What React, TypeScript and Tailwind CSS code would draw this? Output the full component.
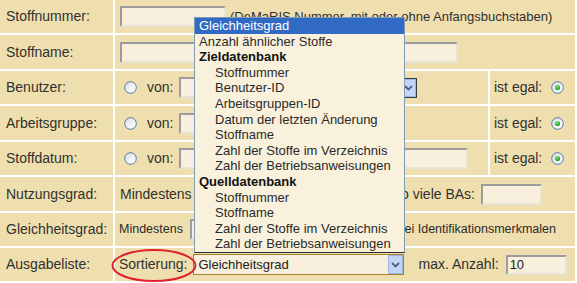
const font = "font-['Liberation_Sans',Arial,sans-serif]"

function Radio({ checked = false, id }: { checked?: boolean; id: string }) {
  return (
    <svg width="13" height="13" viewBox="0 0 13 13" className="shrink-0">
      <defs>
        <linearGradient id={`rf-${id}`} x1="0" y1="0" x2="1" y2="1">
          <stop offset="0" stopColor="#d6d9e0" />
          <stop offset="0.6" stopColor="#f4f6f8" />
          <stop offset="1" stopColor="#ffffff" />
        </linearGradient>
        <radialGradient id={`rd-${id}`} cx="0.4" cy="0.35" r="0.7">
          <stop offset="0" stopColor="#7ee37a" />
          <stop offset="1" stopColor="#1a9a1a" />
        </radialGradient>
      </defs>
      <circle cx="6.5" cy="6.5" r="5.8" fill={`url(#rf-${id})`} stroke="#4f78a8" strokeWidth="1" />
      {checked && <circle cx="6.5" cy="6.5" r="2.6" fill={`url(#rd-${id})`} />}
    </svg>
  )
}

function Field({ w, h = 21, children }: { w: number; h?: number; children?: React.ReactNode }) {
  return (
    <div
      className="shrink-0 flex items-center pl-[2px] text-[13px] text-[#222] bg-[#f8f0dc] border-2 border-t-[#9c9c9c] border-l-[#9c9c9c] border-r-[#e6e2d6] border-b-[#e6e2d6]"
      style={{ width: w, height: h }}
    >
      {children}
    </div>
  )
}

function Arrow() {
  return (
    <div className="w-[15px] h-full shrink-0 flex items-center justify-center bg-[#c4d5f8] border border-[#9ab4e6]">
      <svg width="9" height="6" viewBox="0 0 9 6">
        <path d="M1 1 L4.5 4.5 L8 1" fill="none" stroke="#4d6185" strokeWidth="1.8" />
      </svg>
    </div>
  )
}

function Label({ children }: { children: React.ReactNode }) {
  return <div className="w-[113px] shrink-0 bg-[#f0dfae] flex items-center pl-[6px]">{children}</div>
}

function Egal({ id }: { id: string }) {
  return (
    <div className="w-[85px] shrink-0 bg-[#f0dfae] flex items-center pl-[4px]">
      <span>ist egal:</span>
      <span className="ml-[9px]">
        <Radio checked id={id} />
      </span>
    </div>
  )
}

const items: { t: string; kind: 'hl' | 'top' | 'head' | 'sub' }[] = [
  { t: 'Gleichheitsgrad', kind: 'hl' },
  { t: 'Anzahl ähnlicher Stoffe', kind: 'top' },
  { t: 'Zieldatenbank', kind: 'head' },
  { t: 'Stoffnummer', kind: 'sub' },
  { t: 'Benutzer-ID', kind: 'sub' },
  { t: 'Arbeitsgruppen-ID', kind: 'sub' },
  { t: 'Datum der letzten Änderung', kind: 'sub' },
  { t: 'Stoffname', kind: 'sub' },
  { t: 'Zahl der Stoffe im Verzeichnis', kind: 'sub' },
  { t: 'Zahl der Betriebsanweisungen', kind: 'sub' },
  { t: 'Quelldatenbank', kind: 'head' },
  { t: 'Stoffnummer', kind: 'sub' },
  { t: 'Stoffname', kind: 'sub' },
  { t: 'Zahl der Stoffe im Verzeichnis', kind: 'sub' },
  { t: 'Zahl der Betriebsanweisungen', kind: 'sub' },
]

export default function App() {
  return (
    <div className={`relative w-[577px] h-[283px] overflow-hidden bg-white text-[14px] text-[#303030] ${font}`}>
      <div className="flex flex-col gap-[2px] pr-[2px]">
        {/* Stoffnummer */}
        <div className="flex gap-[2px] h-[33px]">
          <Label>Stoffnummer:</Label>
          <div className="flex-1 bg-[#f0dfae] flex items-center pl-[5px]">
            <Field w={106} />
            <span className="ml-[4px] whitespace-nowrap text-[13px]">(DeMaRIS Nummer, mit oder ohne Anfangsbuchstaben)</span>
          </div>
        </div>

        {/* Stoffname */}
        <div className="flex gap-[2px] h-[34px]">
          <Label>Stoffname:</Label>
          <div className="flex-1 bg-[#f0dfae] flex items-center pl-[5px]">
            <Field w={338} />
          </div>
        </div>

        {/* Benutzer */}
        <div className="flex gap-[2px] h-[33px]">
          <Label>Benutzer:</Label>
          <div className="flex-1 bg-[#f0dfae] flex items-center pl-[9px]">
            <Radio id="b" />
            <span className="ml-[10px]">von:</span>
            <span className="ml-[6px]">
              <Field w={100} />
            </span>
            <div className="ml-[48px] w-[90px] h-[20px] flex bg-[#f8f0dc] border border-[#3a3a3a]">
              <div className="flex-1" />
              <Arrow />
            </div>
          </div>
          <Egal id="b2" />
        </div>

        {/* Arbeitsgruppe */}
        <div className="flex gap-[2px] h-[34px]">
          <Label>Arbeitsgruppe:</Label>
          <div className="flex-1 bg-[#f0dfae] flex items-center pl-[9px]">
            <Radio id="a" />
            <span className="ml-[10px]">von:</span>
            <span className="ml-[6px]">
              <Field w={100} />
            </span>
          </div>
          <Egal id="a2" />
        </div>

        {/* Stoffdatum */}
        <div className="flex gap-[2px] h-[33px]">
          <Label>Stoffdatum:</Label>
          <div className="flex-1 bg-[#f0dfae] flex items-center pl-[9px]">
            <Radio id="s" />
            <span className="ml-[10px]">von:</span>
            <span className="ml-[6px]">
              <Field w={289} />
            </span>
          </div>
          <Egal id="s2" />
        </div>

        {/* Nutzungsgrad */}
        <div className="flex gap-[2px] h-[34px]">
          <Label>Nutzungsgrad:</Label>
          <div className="flex-1 bg-[#f0dfae] flex items-center pl-[5px] pr-[33px]">
            <span>Mindestens</span>
            <span className="ml-auto whitespace-nowrap">so viele BAs:</span>
            <span className="ml-[6px]">
              <Field w={61} />
            </span>
          </div>
        </div>

        {/* Gleichheitsgrad */}
        <div className="flex gap-[2px] h-[33px]">
          <Label>Gleichheitsgrad:</Label>
          <div className="flex-1 bg-[#f0dfae] flex items-center pl-[4px] pr-[19px] text-[12.5px] text-[#2a2a2a]">
            <span>Mindestens</span>
            <span className="ml-[7px]">
              <Field w={40} />
            </span>
            <span className="ml-auto whitespace-nowrap">bei Identifikationsmerkmalen</span>
          </div>
        </div>

        {/* Ausgabeliste */}
        <div className="flex gap-[2px] h-[33px]">
          <Label>Ausgabeliste:</Label>
          <div className="flex-1 bg-[#f0dfae] flex items-center pl-[4px]">
            <span>Sortierung:</span>
            <div className="ml-[6px] w-[211px] h-[21px] flex items-center bg-[#f8f0dc] border border-[#a8822a] text-[13px] text-[#222]">
              <span className="flex-1 pl-[4px]">Gleichheitsgrad</span>
              <Arrow />
            </div>
            <span className="ml-[14px]">max. Anzahl:</span>
            <span className="ml-[7px]">
              <Field w={61} h={20}>10</Field>
            </span>
          </div>
        </div>
      </div>

      {/* Opened select list */}
      <div className="absolute left-[194px] top-[17px] w-[211px] bg-[#f9f1dc] border border-[#7f9db9] border-b-[#2a2a2a] text-[13px] text-[#2a2a2a]">
        {items.map((it, i) => (
          <div
            key={i}
            className={
              it.kind === 'hl'
                ? 'h-[15.6px] leading-[15.6px] pl-[4px] bg-[#316ac5] text-white'
                : it.kind === 'head'
                ? 'h-[15.6px] leading-[15.6px] pl-[4px] font-bold text-[#111]'
                : it.kind === 'sub'
                ? 'h-[15.6px] leading-[15.6px] pl-[20px]'
                : 'h-[15.6px] leading-[15.6px] pl-[4px]'
            }
          >
            {it.t}
          </div>
        ))}
      </div>

      {/* Red highlight ellipse */}
      <svg className="absolute left-[110px] top-[248px]" width="88" height="35" viewBox="0 0 88 35">
        <ellipse cx="44" cy="17.5" rx="41.5" ry="15.5" fill="none" stroke="#e0202e" strokeWidth="2" />
      </svg>
    </div>
  )
}
